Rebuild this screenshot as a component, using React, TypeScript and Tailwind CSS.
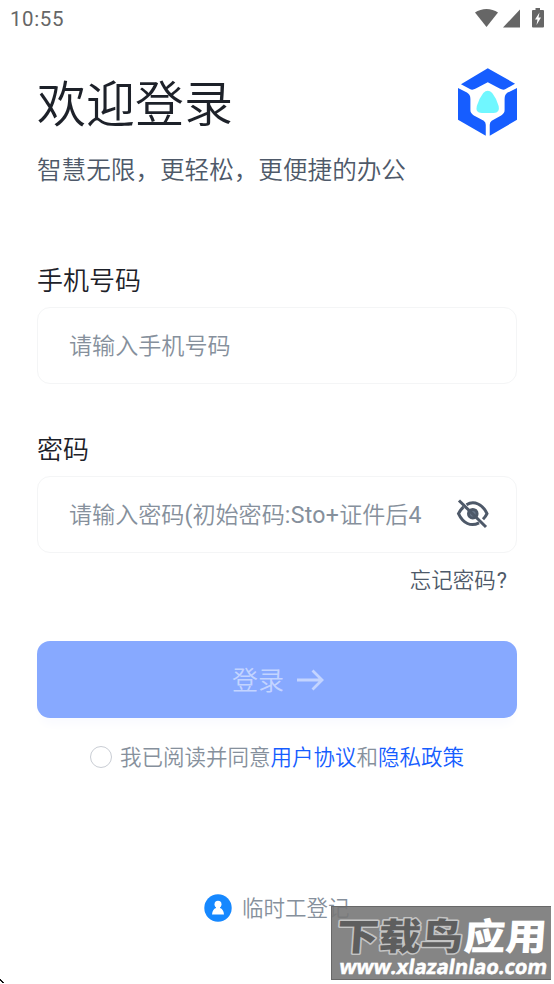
import { useState } from "react";

const FONT = "font-['Roboto','Noto_Sans_CJK_SC',sans-serif]";

function StatusBar() {
  return (
    <header className="flex h-[38px] items-center justify-between pl-[10px] pr-[9px] text-[#666]">
      <span className="text-[20.500px] leading-[38px] tracking-[0.6px]">10:55</span>
      <svg width="70" height="22" viewBox="0 0 70 22" fill="currentColor">
        <path d="M0 4.500C6.500-.2 16.500-.2 23 4.500L11.500 19Z" />
        <path d="M45 1.500V19.500H28Z" />
        <path
          fillRule="evenodd"
          d="M60.500 0h4.500v2h3q1 0 1 1v15.500q0 1-1 1h-10q-1 0-1-1V3q0-1 1-1h2.500ZM64.500 4.500L60 11.500h2.500L61.500 17L66 9.500h-2.500Z"
        />
      </svg>
    </header>
  );
}

function Logo() {
  return (
    <svg width="59" height="70" viewBox="0 0 59.500 70" className="shrink-0">
      <g fill="#165dff">
        <path d="M30 1L57.500 16.500L48 22Q45.500 23.500 42 21.500L30 15L18 21.500Q14.500 23.500 12 22L3 17Z" />
        <path d="M0 21L9 25.500Q12.500 27.500 12.500 32V43Q12.500 46.500 16 48.500L26 54Q28 55.500 28 58V69L0 53Z" />
        <path d="M59.500 21L50 25.500Q47 27.500 47 32V43Q47 46.500 43.500 48.500L34 54Q32 55.500 32 58V69L59.500 53Z" />
      </g>
      <path
        d="M25.500 26Q30 21.500 34.500 26Q38.500 31 41 39Q42.500 46 36 46H24Q17 46 19 39Q21.500 31 25.500 26Z"
        fill="#70f7ff"
      />
    </svg>
  );
}

function EyeOff() {
  return (
    <svg width="34" height="32" viewBox="0 0 34 32" fill="none" stroke="#4e5969" strokeWidth="3">
      <path d="M10.500 5.800C18 1 27 5.500 31 14.700Q29.800 17.500 27 20.300" />
      <path d="M7.500 8Q4.500 10.500 2.500 14.700C7 24.500 15 28 23 23.800" />
      <circle cx="16.800" cy="14.700" r="4.300" fill="#69778a" />
      <path d="M3 1.500L30 28" />
    </svg>
  );
}

function Field({ label, hint, secret }: { label: string; hint: React.ReactNode; secret?: boolean }) {
  return (
    <label className="block">
      <span className="block h-[44px] text-[26px] leading-[36px] text-[#1d2129]">{label}</span>
      <div className="flex h-[77px] items-center justify-between rounded-[13px] border-[1.5px] border-[#f4f5f6] pl-[31px] pr-[26px]">
        <span className="whitespace-nowrap pt-[3px] text-[23.100px] leading-[34px] text-[#86909c]">{hint}</span>
        {secret && <EyeOff />}
      </div>
    </label>
  );
}

function Watermark() {
  return (
    <div className="absolute left-[331px] top-[906px] h-[74px] w-[220px] border border-r-0 border-[#686868] bg-[#787878]/90 font-['Noto_Sans_CJK_SC',sans-serif] font-black">
      <svg width="220" height="73" viewBox="0 0 220 73">
        <g fontSize="37" strokeLinejoin="round" paintOrder="stroke" transform="skewX(-4)">
          <text x="7" y="43" textLength="126" lengthAdjust="spacingAndGlyphs" fill="#5e5e5e" stroke="#c4c4c4" strokeWidth="3">
            下载鸟
          </text>
          <text x="134" y="43" textLength="83" lengthAdjust="spacingAndGlyphs" fill="#fff">
            应用
          </text>
        </g>
        <text
          x="17"
          y="67"
          textLength="208"
          lengthAdjust="spacingAndGlyphs"
          transform="skewX(-9)"
          fontSize="20"
          fontFamily="Open Sans, sans-serif"
          fontWeight="700"
          fill="#fff"
          stroke="#fff"
          strokeWidth="0.5"
        >
          www.xlazalnlao.com
        </text>
      </svg>
    </div>
  );
}

export default function App() {
  const [agreed, setAgreed] = useState(false);

  return (
    <div className={`relative h-[984px] w-[554px] overflow-hidden bg-white ${FONT}`}>
      <StatusBar />

      <main className="ml-[37px] w-[480px] font-[350]">
        <div className="flex justify-between pt-[29px]">
          <h1 className="pt-[4px] text-[49px] leading-[70px] text-[#1d2129]">欢迎登录</h1>
          <Logo />
        </div>
        <p className="mt-[12px] text-[24.600px] leading-[36px] text-[#4e5969]">智慧无限，更轻松，更便捷的办公</p>

        <div className="mt-[74px]">
          <Field label="手机号码" hint="请输入手机号码" />
        </div>
        <div className="mt-[48px]">
          <Field
            label="密码"
            hint={
              <>
                请输入密码<span className="font-normal">(</span>初始密码
                <span className="font-normal tracking-[0.3px]">:Sto+</span>证件后<span className="font-normal">4</span>
              </>
            }
            secret
          />
        </div>
        <div className="mt-[11px] pr-[10px] text-right text-[21.500px] leading-[34px] text-[#4e5969]">
          忘记密码<span className="ml-[1px] font-normal">?</span>
        </div>

        <button className="mt-[43px] flex h-[77px] w-full items-center justify-center gap-[13px] rounded-[13px] bg-[#87a9ff] pl-[2px] text-[26px] text-[#c3d4ff] shadow-[0_10px_10px_-3px_#fafbff]">
          <span className="pt-[3px]">登录</span>
          <svg width="27" height="22" viewBox="0 0 27 22" fill="none" stroke="currentColor" strokeWidth="2.800">
            <path d="M0 11H24M15.500 1.500L25 11L15.500 20.500" />
          </svg>
        </button>

        {/* Agreement */}
        <div className="mt-[21px] flex h-[36px] items-center pl-[53px] text-[21.500px] leading-[36px] text-[#86909c]">
          <button
            aria-pressed={agreed}
            onClick={() => setAgreed(!agreed)}
            className={`mr-[8px] size-[22px] rounded-full border-[1.5px] border-[#c9cdd4] ${agreed ? "bg-[#165dff]" : ""}`}
          />
          <span className="whitespace-nowrap pt-[2px]">
            我已阅读并同意<span className="text-[#165dff]">用户协议</span>和<span className="text-[#165dff]">隐私政策</span>
          </span>
        </div>

        <div className="mt-[115px] flex h-[36px] items-center gap-[10px] pl-[167px] text-[21.500px] leading-[36px] text-[#86909c]">
          <svg width="28" height="28" viewBox="0 0 28 28">
            <circle cx="14" cy="14" r="13.700" fill="#1688ff" />
            <circle cx="14" cy="10.300" r="3.500" fill="#fff" />
            <path d="M12 12h4v2q3.500 1 4 6.500H8q.5-5.500 4-6.500Z" fill="#fff" />
          </svg>
          <span className="pt-[2px]">临时工登记</span>
        </div>
      </main>

      <Watermark />
      <svg className="absolute left-0 top-[979px]" width="5" height="5" fill="#111">
        <path d="M0 0h1v1h1v1h1v1h1v1h-2v-1h-1v-1h-1Z" />
      </svg>
    </div>
  );
}
